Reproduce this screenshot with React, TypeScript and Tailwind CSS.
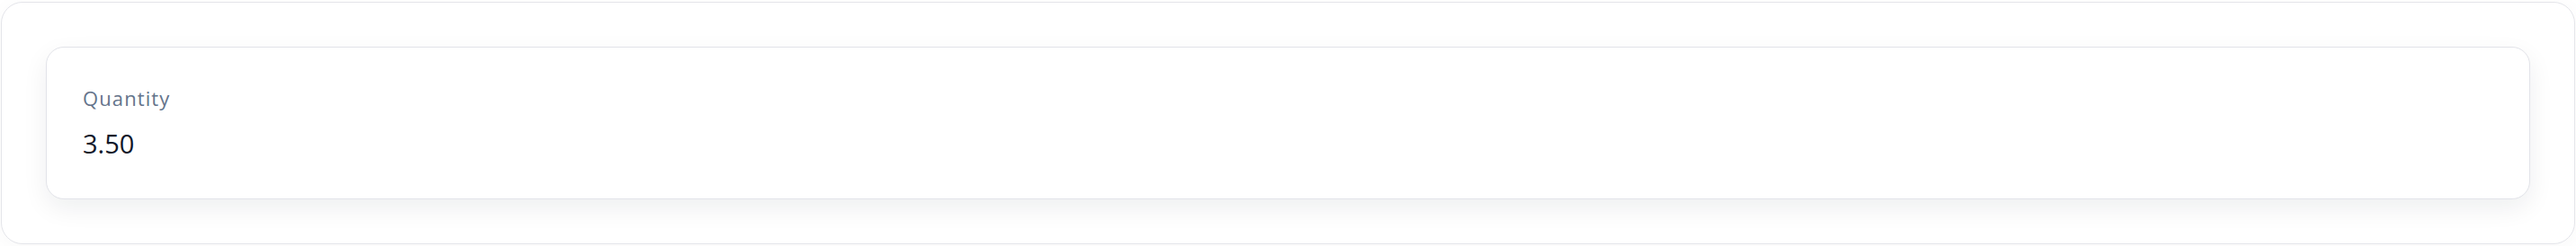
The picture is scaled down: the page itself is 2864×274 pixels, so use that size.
export default function App() {
  return (
    <div className="min-h-[274px] bg-white px-px pt-[2px] pb-[1px]" style={{ fontFamily: "'Open Sans', Lato, sans-serif" }}>
      <div className="rounded-[24px] border border-[#e4e5ea] bg-white p-[49px] shadow-[0_4px_24px_rgba(15,23,42,0.03)]">
        <div className="flex h-[170px] flex-col rounded-[20px] border border-[#e2e3e9] bg-white px-10 pt-[44px] shadow-[0_10px_28px_rgba(15,23,42,0.07)]">
          <span className="text-[22px] leading-[24px] tracking-[0.05em] text-[#64748b]">Quantity</span>
          <span className="mt-[22px] text-[29px] leading-[34px] text-[#0f172a]">3.50</span>
        </div>
      </div>
    </div>
  );
}
